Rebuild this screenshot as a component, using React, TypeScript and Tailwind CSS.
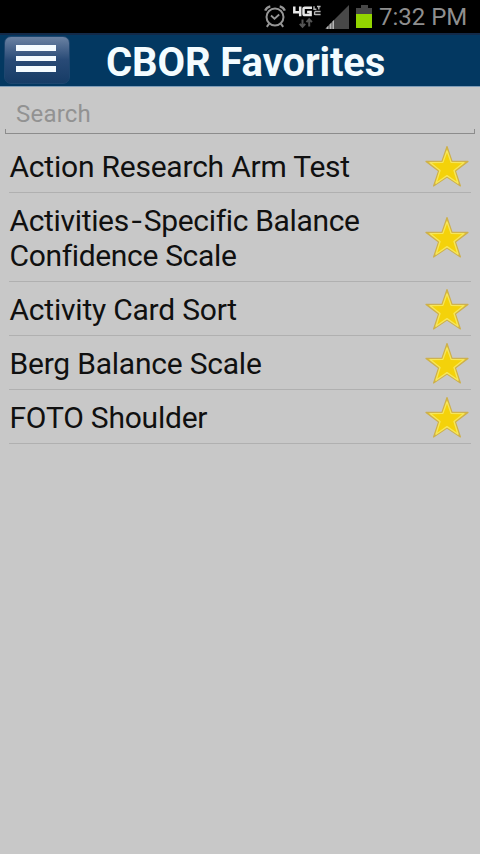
import React from "react";

type Item = { lines: string[] };

const items: Item[] = [
  { lines: ["Action Research Arm Test"] },
  { lines: ["Activities-Specific Balance", "Confidence Scale"] },
  { lines: ["Activity Card Sort"] },
  { lines: ["Berg Balance Scale"] },
  { lines: ["FOTO Shoulder"] },
];

function Line({ text, tight }: { text: string; tight: boolean }) {
  const [head, tail] = text.split("-");
  return (
    <div className={tight ? "tracking-[-0.34px]" : "tracking-[-0.22px]"}>
      {head}
      {tail && <span className="inline-block w-[15px] origin-center scale-x-125 text-center">-</span>}
      {tail}
    </div>
  );
}

function Star() {
  const outer = "23,2.5 28,17.2 44,17.4 31.4,27 36.4,42 23,33 9.6,42 14.6,27 2,17.4 18,17.2";
  const rim = "23,6.8 27.1,18.4 40,18.6 30,26.5 34,39.2 23,31.6 12,39.2 16,26.5 6,18.6 18.9,18.4";
  return (
    <svg className="h-[46px] w-[46px] shrink-0" viewBox="0 0 46 46">
      <polygon points={outer} fill="#e6c52c" stroke="#cdb04c" strokeWidth="1.2" strokeLinejoin="round" />
      <polygon points={rim} fill="#f4d20a" stroke="#f6e65c" strokeWidth="1.3" strokeLinejoin="round" />
    </svg>
  );
}

function AlarmIcon() {
  return (
    <svg className="h-[26px] w-[24px]" viewBox="0 0 24 26" fill="none" stroke="#969696" strokeWidth="2">
      <circle cx="12" cy="14" r="8.5" />
      <path d="M8 12.5l3.5 3.2 4.7-4.2" strokeWidth="1.8" />
      <path d="M2.2 7.7Q3.5 4.2 7.3 3.4M16.7 3.4Q20.5 4.2 21.8 7.7" strokeWidth="2.4" />
      <path d="M6.2 20.7l-2.4 3.2M17.8 20.7l2.4 3.2" />
    </svg>
  );
}

function NetworkIcon() {
  return (
    <svg className="h-[26px] w-[30px]" viewBox="0 0 30 26" fill="none">
      <path d="M2.3 2.5v5.7h7M8.2 2.5v9.7M20 3.7h-7.2q-1.3 0-1.3 1.3v4.7q0 1.3 1.3 1.3h5.8V8h-3.5" stroke="#e8e8e8" strokeWidth="2.5" />
      <path d="M22 2.3v3h2.4M25 2.5h3.6M26.8 2.5v3M28.6 7.5h-5.8M28.6 10.5h-5.8M22.6 7.5v3.4" stroke="#b5b5b5" strokeWidth="1.4" />
      <path d="M10.5 15.5v7M7.8 19.8l2.7 3 2.7-3M17.2 22.5v-7M14.5 18.2l2.7-3 2.7 3" stroke="#555" strokeWidth="2" />
    </svg>
  );
}

function SignalIcon() {
  return (
    <svg className="h-[24px] w-[25px]" viewBox="0 0 25 24">
      <path d="M24 0v24H0z" fill="#484848" />
      <path d="M1.5 24v-1.5L3.5 20.5V24zM4.5 24v-4.5L6.5 17.5V24zM7.4 24v-7.4L9 15V24z" fill="#b5b5b5" />
    </svg>
  );
}

export default function App() {
  return (
    <div className="flex h-[854px] w-[480px] flex-col overflow-hidden bg-[#c8c8c8] font-['Roboto','Liberation_Sans',sans-serif]">
      <div className="flex h-[33px] shrink-0 items-start bg-black">
        <div className="ml-[263px] mt-[3px]"><AlarmIcon /></div>
        <div className="ml-[5px] mt-[4px]"><NetworkIcon /></div>
        <div className="ml-[3px] mt-[5px]"><SignalIcon /></div>
        <div className="ml-[6px] mt-[5px] flex w-[16px] flex-col items-center">
          <div className="h-[3px] w-[7px] bg-[#484848]" />
          <div className="h-[6px] w-full bg-[#484848]" />
          <div className="h-[14px] w-full bg-[#93d500]" />
        </div>
        <span className="ml-[7px] mt-[3px] whitespace-nowrap text-[24px] leading-[28px] text-[#8f8f8f]">7:32 PM</span>
      </div>

      <header className="flex h-[54px] shrink-0 items-start border-t-2 border-b border-t-[#132a49] border-b-[#7f9db8] bg-[#033861] pl-[4px]">
        <button className="mt-px flex h-[48px] w-[66px] flex-col items-center rounded-[7px] border border-[#1d466f] bg-linear-to-b from-[#6b82a3] via-[#284a76] via-50% to-[#163c66] pt-[8px] pr-[2px]">
          <span className="h-[6px] w-[40px] bg-[#f4fbff]" />
          <span className="mt-[5px] h-[5px] w-[40px] bg-[#f4fbff]" />
          <span className="mt-[5px] h-[6px] w-[40px] bg-[#f4fbff]" />
        </button>
        <h1 className="ml-[36px] mt-[5px] whitespace-nowrap text-[40px] leading-[46px] font-bold tracking-[-0.1px] text-[#f4fcff]">CBOR Favorites</h1>
      </header>

      <div className="mx-[5px] flex h-[47px] shrink-0 flex-col justify-end">
        <input
          placeholder="Search"
          className="h-[30px] w-full bg-transparent px-[11px] text-[24px] leading-[28px] tracking-[0.2px] text-black outline-none placeholder:text-[#929292]"
        />
        <div className="h-[5px] shrink-0 border-x border-b border-[#8c8c8c]" />
      </div>

      <ul className="mt-[5px] px-[9px]">
        {items.map((item) => (
          <li key={item.lines[0]} className="flex items-center justify-between border-b border-[#b0b0b0] pt-[9px] pb-[9px]">
            <div className="relative top-px pl-[0.5px] text-[30px] leading-[35px] whitespace-nowrap text-[#101010]">
              {item.lines.map((line) => (
                <Line key={line} text={line} tight={item.lines.length > 1} />
              ))}
            </div>
            <div className="-mt-[5px] -mb-[7px] mr-px"><Star /></div>
          </li>
        ))}
      </ul>
    </div>
  );
}
